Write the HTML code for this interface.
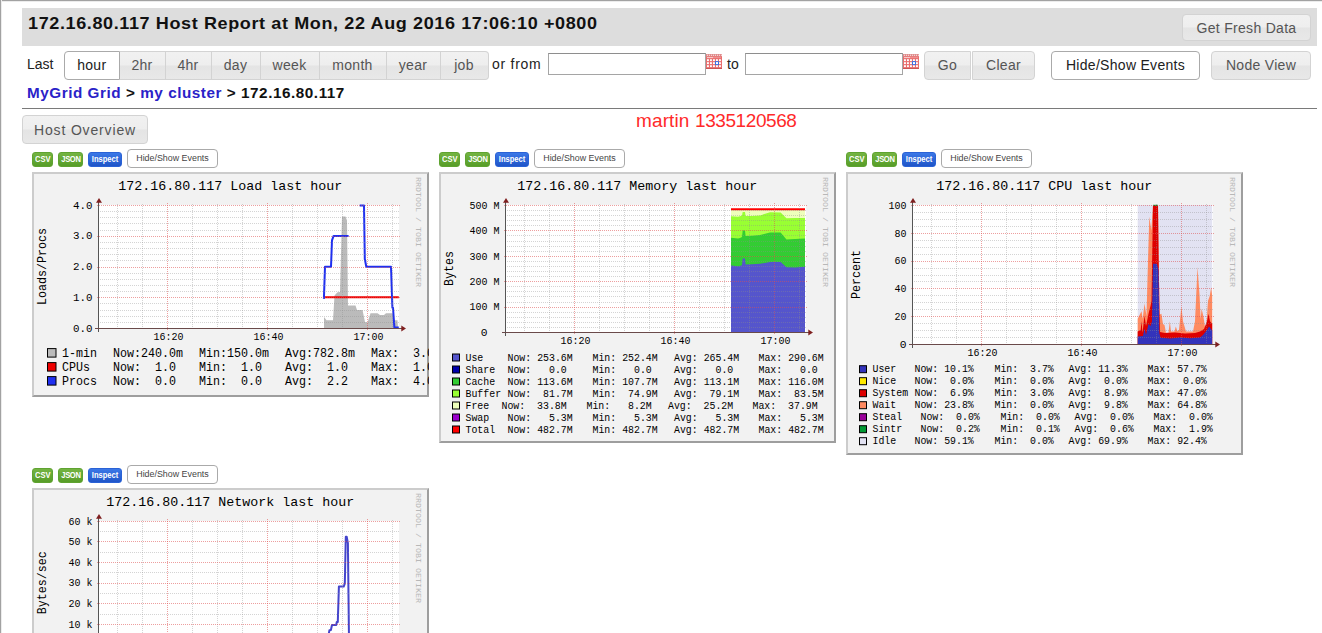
<!DOCTYPE html>
<html><head><meta charset="utf-8"><title>Host Report</title><style>
*{box-sizing:border-box}
html,body{margin:0;padding:0}
body{width:1322px;height:633px;overflow:hidden;background:#fff;position:relative;font-family:"Liberation Sans",sans-serif;font-size:13px;color:#222}
.abs{position:absolute}
.frame-top{position:absolute;left:0;top:0;width:1322px;height:2px;background:linear-gradient(#a2a2a2 0,#a2a2a2 50%,#ececec 50%,#ececec 100%)}
.frame-left{position:absolute;left:0;top:0;width:2px;height:633px;background:linear-gradient(90deg,#a2a2a2 0,#a2a2a2 50%,#ececec 50%,#ececec 100%)}
.hdr{position:absolute;left:22px;top:8px;width:1295px;height:38px;background:#dddddd}
.hdr h1{position:absolute;left:5.5px;top:5.5px;margin:0;font-size:17px;line-height:20px;font-weight:bold;color:#111;white-space:nowrap;letter-spacing:0.58px;transform:scaleX(1.06);transform-origin:0 0}
.btn{position:absolute;height:28.5px;border:1px solid #d3d3d3;border-radius:4px;background:linear-gradient(#f1f1f1 0,#eeeeee 49%,#e4e4e4 51%,#e8e8e8 100%);color:#555;font-size:14px;text-align:center;line-height:27px;white-space:nowrap;letter-spacing:0.3px}
.btn.on{background:#fff;border-color:#aaa;color:#212121}
.seg{border-radius:0;border-left-width:0}
.txt{position:absolute;white-space:nowrap;font-size:14px;color:#222}
.inp{position:absolute;height:22px;border:1px solid #a5a5a5;border-top-color:#8e8e8e;background:#fff}
.crumb{position:absolute;left:26.5px;top:85px;font-weight:bold;font-size:14px;line-height:16px;white-space:nowrap;color:#111;letter-spacing:0.5px;transform:scaleX(1.09);transform-origin:0 0}
.crumb a{color:#2a22c8;text-decoration:none}
.hr{position:absolute;left:22px;top:108px;width:1295px;height:1px;background:#7a7a7a}
.wm{position:absolute;left:636px;top:109px;letter-spacing:-0.26px;font-size:19px;color:#ff2a2a;white-space:nowrap;line-height:24px}
.sb{position:absolute;height:15px;border-radius:3px;color:#fff;font-size:8.6px;font-weight:bold;text-align:center;line-height:12.5px;white-space:nowrap}
.sb span{display:inline-block;transform:scaleX(.88)}
.sb.g{background:linear-gradient(#74b442,#579d28);border:1px solid #5fa331}
.sb.b{background:linear-gradient(#3b78e7,#1f55c8);border:1px solid #2a62d6}
.hs{position:absolute;height:19px;width:91px;border:1px solid #aaa;border-radius:4px;background:#fff;color:#444;font-size:8.9px;text-align:center;line-height:17px;white-space:nowrap}
svg{position:absolute;display:block}
svg text{font-family:"Liberation Mono",monospace;fill:#000}
</style></head><body>
<div class="frame-top"></div><div class="frame-left"></div>
<div class="hdr"><h1 id="title">172.16.80.117 Host Report at Mon, 22 Aug 2016 17:06:10 +0800</h1></div>
<div class="btn" style="left:1182px;top:13.5px;width:129px;height:27px;line-height:26px">Get Fresh Data</div>
<div class="txt" style="left:27px;top:56px">Last</div>
<div class="btn on" style="left:64px;top:51px;width:55.5px;border-radius:4px 0 0 4px;">hour</div>
<div class="btn" style="left:119.5px;top:51px;width:46.0px;border-radius:0;border-left-width:0;border-left-width:0;">2hr</div>
<div class="btn" style="left:165.5px;top:51px;width:46.0px;border-radius:0;border-left-width:0;">4hr</div>
<div class="btn" style="left:211.5px;top:51px;width:49.0px;border-radius:0;border-left-width:0;">day</div>
<div class="btn" style="left:260.5px;top:51px;width:59.0px;border-radius:0;border-left-width:0;">week</div>
<div class="btn" style="left:319.5px;top:51px;width:67.0px;border-radius:0;border-left-width:0;">month</div>
<div class="btn" style="left:386.5px;top:51px;width:54.0px;border-radius:0;border-left-width:0;">year</div>
<div class="btn" style="left:440.5px;top:51px;width:48.0px;border-radius:0 4px 4px 0;border-left-width:0;">job</div>
<div class="txt" style="left:492px;top:56px;letter-spacing:0.74px">or from</div>
<div class="inp" style="left:548px;top:53px;width:158px"></div>
<svg style="left:706px;top:54px" width="16" height="15" viewBox="0 0 16 15"><rect x="0" y="0.3" width="16" height="2.2" fill="#c44"/><circle cx="1.2" cy="1.2" r="0.75" fill="#fff"/><circle cx="3.2" cy="1.2" r="0.75" fill="#fff"/><circle cx="5.2" cy="1.2" r="0.75" fill="#fff"/><circle cx="7.2" cy="1.2" r="0.75" fill="#fff"/><circle cx="9.2" cy="1.2" r="0.75" fill="#fff"/><circle cx="11.2" cy="1.2" r="0.75" fill="#fff"/><circle cx="13.2" cy="1.2" r="0.75" fill="#fff"/><circle cx="15.2" cy="1.2" r="0.75" fill="#fff"/><rect x="0" y="2.3" width="16" height="12.7" fill="#e96e6e"/><rect x="0" y="14" width="16" height="1" fill="#c95555"/><rect x="1" y="3.2" width="6" height="0.9" fill="#fbe0e0"/><rect x="7" y="3.2" width="8" height="0.9" fill="#f19a9a"/><rect x="1" y="5.2" width="1.9" height="1.9" fill="#fff"/><rect x="4" y="5.2" width="1.9" height="1.9" fill="#fff"/><rect x="7" y="5.2" width="1.9" height="1.9" fill="#fff"/><rect x="10" y="5.2" width="1.9" height="1.9" fill="#fff"/><rect x="13" y="5.2" width="1.9" height="1.9" fill="#fff"/><rect x="1" y="8.2" width="1.9" height="1.9" fill="#fff"/><rect x="4" y="8.2" width="1.9" height="1.9" fill="#fff"/><rect x="7" y="8.2" width="1.9" height="1.9" fill="#fff"/><rect x="10" y="8.2" width="1.9" height="1.9" fill="#fff"/><rect x="13" y="8.2" width="1.9" height="1.9" fill="#fff"/><rect x="1" y="11.2" width="1.9" height="1.9" fill="#fff"/><rect x="4" y="11.2" width="1.9" height="1.9" fill="#fff"/><rect x="7" y="11.2" width="1.9" height="1.9" fill="#fff"/><rect x="10" y="11.2" width="1.9" height="1.9" fill="#fff"/><rect x="13" y="11.2" width="1.9" height="1.9" fill="#fff"/><rect x="9.5" y="7.6" width="3" height="3" fill="#fff" stroke="#3d6fe0" stroke-width="1"/></svg>
<svg style="left:903px;top:54px" width="16" height="15" viewBox="0 0 16 15"><rect x="0" y="0.3" width="16" height="2.2" fill="#c44"/><circle cx="1.2" cy="1.2" r="0.75" fill="#fff"/><circle cx="3.2" cy="1.2" r="0.75" fill="#fff"/><circle cx="5.2" cy="1.2" r="0.75" fill="#fff"/><circle cx="7.2" cy="1.2" r="0.75" fill="#fff"/><circle cx="9.2" cy="1.2" r="0.75" fill="#fff"/><circle cx="11.2" cy="1.2" r="0.75" fill="#fff"/><circle cx="13.2" cy="1.2" r="0.75" fill="#fff"/><circle cx="15.2" cy="1.2" r="0.75" fill="#fff"/><rect x="0" y="2.3" width="16" height="12.7" fill="#e96e6e"/><rect x="0" y="14" width="16" height="1" fill="#c95555"/><rect x="1" y="3.2" width="6" height="0.9" fill="#fbe0e0"/><rect x="7" y="3.2" width="8" height="0.9" fill="#f19a9a"/><rect x="1" y="5.2" width="1.9" height="1.9" fill="#fff"/><rect x="4" y="5.2" width="1.9" height="1.9" fill="#fff"/><rect x="7" y="5.2" width="1.9" height="1.9" fill="#fff"/><rect x="10" y="5.2" width="1.9" height="1.9" fill="#fff"/><rect x="13" y="5.2" width="1.9" height="1.9" fill="#fff"/><rect x="1" y="8.2" width="1.9" height="1.9" fill="#fff"/><rect x="4" y="8.2" width="1.9" height="1.9" fill="#fff"/><rect x="7" y="8.2" width="1.9" height="1.9" fill="#fff"/><rect x="10" y="8.2" width="1.9" height="1.9" fill="#fff"/><rect x="13" y="8.2" width="1.9" height="1.9" fill="#fff"/><rect x="1" y="11.2" width="1.9" height="1.9" fill="#fff"/><rect x="4" y="11.2" width="1.9" height="1.9" fill="#fff"/><rect x="7" y="11.2" width="1.9" height="1.9" fill="#fff"/><rect x="10" y="11.2" width="1.9" height="1.9" fill="#fff"/><rect x="13" y="11.2" width="1.9" height="1.9" fill="#fff"/><rect x="9.5" y="7.6" width="3" height="3" fill="#fff" stroke="#3d6fe0" stroke-width="1"/></svg>
<div class="txt" style="left:727px;top:56px">to</div>
<div class="inp" style="left:745px;top:53px;width:158px"></div>
<div class="btn" style="left:924px;top:51px;width:47px;border-radius:4px 0 0 4px">Go</div>
<div class="btn" style="left:972px;top:51px;width:63px;border-radius:0 4px 4px 0">Clear</div>
<div class="btn on" style="left:1051px;top:51px;width:149px">Hide/Show Events</div>
<div class="btn" style="left:1211px;top:51px;width:100px">Node View</div>
<div class="crumb"><a>MyGrid Grid</a> &gt; <a>my cluster</a> &gt; 172.16.80.117</div>
<div class="hr"></div>
<div class="btn" style="left:22px;top:115px;width:126px;letter-spacing:0.85px;line-height:28px">Host Overview</div>
<div class="wm" style="letter-spacing:0.12px">martin</div><div class="wm" style="left:695px;letter-spacing:-0.42px">1335120568</div>
<div class="sb g" style="left:32px;top:152px;width:21px"><span>CSV</span></div>
<div class="sb g" style="left:58px;top:152px;width:25px;letter-spacing:-0.4px"><span>JSON</span></div>
<div class="sb b" style="left:88px;top:152px;width:34px"><span>Inspect</span></div>
<div class="hs" style="left:127px;top:149px">Hide/Show Events</div>
<div class="sb g" style="left:439px;top:152px;width:21px"><span>CSV</span></div>
<div class="sb g" style="left:465px;top:152px;width:25px;letter-spacing:-0.4px"><span>JSON</span></div>
<div class="sb b" style="left:495px;top:152px;width:34px"><span>Inspect</span></div>
<div class="hs" style="left:534px;top:149px">Hide/Show Events</div>
<div class="sb g" style="left:846px;top:152px;width:21px"><span>CSV</span></div>
<div class="sb g" style="left:872px;top:152px;width:25px;letter-spacing:-0.4px"><span>JSON</span></div>
<div class="sb b" style="left:902px;top:152px;width:34px"><span>Inspect</span></div>
<div class="hs" style="left:941px;top:149px">Hide/Show Events</div>
<div class="sb g" style="left:32px;top:468px;width:21px"><span>CSV</span></div>
<div class="sb g" style="left:58px;top:468px;width:25px;letter-spacing:-0.4px"><span>JSON</span></div>
<div class="sb b" style="left:88px;top:468px;width:34px"><span>Inspect</span></div>
<div class="hs" style="left:127px;top:465px">Hide/Show Events</div>
<svg style="left:32px;top:172px" width="397" height="225" viewBox="0 0 397 225"><rect x="0" y="0" width="397" height="225" fill="#f2f2f2"/><path d="M0 0H397V2H2V225H0Z" fill="#cccccc"/><path d="M397 0V225H0L2 223H395V2Z" fill="#9e9e9e"/><rect x="67" y="33" width="300" height="123" fill="#fff"/><path d="M292.0 156.0 L292.0 145.0 L294.5 148.3 L301.0 148.3 L302.5 123.5 L305.5 120.2 L308.0 120.0 L310.0 44.4 L313.5 44.4 L315.0 48.4 L316.0 133.5 L323.5 133.5 L325.0 138.0 L330.5 138.0 L333.0 150.0 L335.5 150.5 L338.5 141.2 L345.5 141.2 L348.0 143.0 L352.0 143.0 L354.0 141.2 L360.5 141.2 L362.5 148.3 L365.5 148.3 L366.0 156.0" fill="#bbbbbb"/><path d="M292.0 125.2 L366.8 125.2" stroke="#ee0000" stroke-width="2" fill="none"/><path d="M291.9 126.9 L293.0 94.8 L299.0 94.8 L300.0 68.3 L301.6 63.9 L316.6 63.9" stroke="#2030f0" stroke-width="2" fill="none" stroke-linejoin="round"/><path d="M327.7 33.5 L332.0 33.5 L332.8 87.0 L334.3 94.8 L359.0 94.8 L360.4 135.7 L361.0 135.7 L362.4 155.6 L366.8 155.6" stroke="#2030f0" stroke-width="2" fill="none" stroke-linejoin="round"/><path d="M66 150.5H368M66 144.5H368M66 138.5H368M66 131.5H368M66 119.5H368M66 113.5H368M66 107.5H368M66 101.5H368M66 88.5H368M66 82.5H368M66 76.5H368M66 70.5H368M66 58.5H368M66 51.5H368M66 45.5H368M66 39.5H368" stroke="#8f8f8f" stroke-opacity="0.38" stroke-width="1" stroke-dasharray="1 1" fill="none" shape-rendering="crispEdges"/><path d="M360.5 32V157M310.5 32V157M285.5 32V157M260.5 32V157M210.5 32V157M185.5 32V157M160.5 32V157M110.5 32V157M85.5 32V157" stroke="#8f8f8f" stroke-opacity="0.38" stroke-width="1" stroke-dasharray="1 1" fill="none" shape-rendering="crispEdges"/><path d="M65 156.5H369M65 125.5H369M65 95.5H369M65 64.5H369M65 33.5H369" stroke="#de5050" stroke-opacity="0.55" stroke-width="1" stroke-dasharray="1 1" fill="none" shape-rendering="crispEdges"/><path d="M135.5 31V158M235.5 31V158M335.5 31V158" stroke="#de5050" stroke-opacity="0.55" stroke-width="1" stroke-dasharray="1 1" fill="none" shape-rendering="crispEdges"/><path d="M66.5 160V29" stroke="#555" stroke-width="1" fill="none" shape-rendering="crispEdges"/><path d="M63 156.5H371" stroke="#6a4a4a" stroke-width="1" fill="none" shape-rendering="crispEdges"/><path d="M369.3 153.5L374 156.5L369.3 159.5Z" fill="#7f1f1f"/><path d="M64 30.7L67 26L70 30.7Z" fill="#7f1f1f"/><text x="198.3" y="18.1" font-size="13.4" text-anchor="middle" xml:space="preserve" textLength="224.00" lengthAdjust="spacingAndGlyphs">172.16.80.117 Load last hour</text><text x="60.5" y="159.7" font-size="11.3" text-anchor="end" xml:space="preserve" textLength="19.50" lengthAdjust="spacingAndGlyphs">0.0</text><text x="60.5" y="128.95" font-size="11.3" text-anchor="end" xml:space="preserve" textLength="19.50" lengthAdjust="spacingAndGlyphs">1.0</text><text x="60.5" y="98.2" font-size="11.3" text-anchor="end" xml:space="preserve" textLength="19.50" lengthAdjust="spacingAndGlyphs">2.0</text><text x="60.5" y="67.45" font-size="11.3" text-anchor="end" xml:space="preserve" textLength="19.50" lengthAdjust="spacingAndGlyphs">3.0</text><text x="60.5" y="36.7" font-size="11.3" text-anchor="end" xml:space="preserve" textLength="19.50" lengthAdjust="spacingAndGlyphs">4.0</text><text x="136.5" y="168.4" font-size="11.3" text-anchor="middle" xml:space="preserve" textLength="30.00" lengthAdjust="spacingAndGlyphs">16:20</text><text x="236.5" y="168.4" font-size="11.3" text-anchor="middle" xml:space="preserve" textLength="30.00" lengthAdjust="spacingAndGlyphs">16:40</text><text x="336.5" y="168.4" font-size="11.3" text-anchor="middle" xml:space="preserve" textLength="30.00" lengthAdjust="spacingAndGlyphs">17:00</text><g transform="translate(14 94.5) rotate(-90)"><text x="0" y="0" font-size="12" text-anchor="middle" xml:space="preserve" textLength="77.00" lengthAdjust="spacingAndGlyphs">Loads/Procs</text></g><g transform="translate(383.5 5) rotate(90)"><text x="0" y="0" font-size="8" text-anchor="start" xml:space="preserve" textLength="110.00" lengthAdjust="spacingAndGlyphs" style="fill:#b8b8b8">RRDTOOL / TOBI OETIKER</text></g><rect x="15.5" y="176.6" width="8.5" height="8.5" fill="#bbbbbb" stroke="#000" stroke-width="1"/><text x="30" y="184.6" font-size="12" text-anchor="start" xml:space="preserve" textLength="35.00" lengthAdjust="spacingAndGlyphs">1-min</text><text x="81" y="184.6" font-size="12" text-anchor="start" xml:space="preserve" textLength="70.00" lengthAdjust="spacingAndGlyphs">Now:240.0m</text><text x="167" y="184.6" font-size="12" text-anchor="start" xml:space="preserve" textLength="70.00" lengthAdjust="spacingAndGlyphs">Min:150.0m</text><text x="253" y="184.6" font-size="12" text-anchor="start" xml:space="preserve" textLength="70.00" lengthAdjust="spacingAndGlyphs">Avg:782.8m</text><text x="339" y="184.6" font-size="12" text-anchor="start" xml:space="preserve" textLength="70.00" lengthAdjust="spacingAndGlyphs">Max:  3.0 </text><rect x="15.5" y="190.6" width="8.5" height="8.5" fill="#ee0000" stroke="#000" stroke-width="1"/><text x="30" y="198.6" font-size="12" text-anchor="start" xml:space="preserve" textLength="28.00" lengthAdjust="spacingAndGlyphs">CPUs</text><text x="81" y="198.6" font-size="12" text-anchor="start" xml:space="preserve" textLength="70.00" lengthAdjust="spacingAndGlyphs">Now:  1.0 </text><text x="167" y="198.6" font-size="12" text-anchor="start" xml:space="preserve" textLength="70.00" lengthAdjust="spacingAndGlyphs">Min:  1.0 </text><text x="253" y="198.6" font-size="12" text-anchor="start" xml:space="preserve" textLength="70.00" lengthAdjust="spacingAndGlyphs">Avg:  1.0 </text><text x="339" y="198.6" font-size="12" text-anchor="start" xml:space="preserve" textLength="70.00" lengthAdjust="spacingAndGlyphs">Max:  1.0 </text><rect x="15.5" y="204.6" width="8.5" height="8.5" fill="#2030f0" stroke="#000" stroke-width="1"/><text x="30" y="212.6" font-size="12" text-anchor="start" xml:space="preserve" textLength="35.00" lengthAdjust="spacingAndGlyphs">Procs</text><text x="81" y="212.6" font-size="12" text-anchor="start" xml:space="preserve" textLength="70.00" lengthAdjust="spacingAndGlyphs">Now:  0.0 </text><text x="167" y="212.6" font-size="12" text-anchor="start" xml:space="preserve" textLength="70.00" lengthAdjust="spacingAndGlyphs">Min:  0.0 </text><text x="253" y="212.6" font-size="12" text-anchor="start" xml:space="preserve" textLength="70.00" lengthAdjust="spacingAndGlyphs">Avg:  2.2 </text><text x="339" y="212.6" font-size="12" text-anchor="start" xml:space="preserve" textLength="70.00" lengthAdjust="spacingAndGlyphs">Max:  4.0 </text></svg>
<svg style="left:439px;top:172px" width="397" height="271" viewBox="0 0 397 271"><rect x="0" y="0" width="397" height="271" fill="#f2f2f2"/><path d="M0 0H397V2H2V271H0Z" fill="#cccccc"/><path d="M397 0V271H0L2 269H395V2Z" fill="#9e9e9e"/><rect x="67" y="33" width="300" height="127" fill="#fff"/><path d="M292.0 37.5 L366.0 37.5 L366.0 160 L292.0 160 Z" fill="#eeffbb"/><path d="M292.0 44.3 L299.0 44.8 L301.0 44.3 L303.0 43.6 L303.7 40.0 L306.0 40.0 L306.6 44.0 L313.0 43.9 L321.0 43.4 L331.0 40.3 L341.6 40.6 L347.5 46.2 L356.0 46.0 L366.0 46.0 L366.0 160 L292.0 160 Z" fill="#99ff33"/><path d="M292.0 65.7 L299.0 66.6 L301.0 66.0 L303.0 65.0 L303.7 58.5 L306.0 58.5 L306.6 64.0 L313.0 63.8 L321.0 63.0 L331.0 60.4 L341.6 60.6 L347.5 67.5 L356.0 67.0 L366.0 66.4 L366.0 160 L292.0 160 Z" fill="#33cc33"/><path d="M292.0 93.4 L299.0 94.3 L301.0 94.0 L303.0 93.0 L303.7 86.5 L306.0 86.5 L306.6 92.4 L313.0 92.2 L321.0 91.8 L331.0 90.0 L341.6 90.0 L347.5 95.3 L356.0 95.5 L366.0 94.8 L366.0 160 L292.0 160 Z" fill="#5555cc"/><path d="M292.0 37.3 L366.0 37.3" stroke="#ff0000" stroke-width="2" fill="none"/><path d="M66 155.5H368M66 150.5H368M66 145.5H368M66 140.5H368M66 130.5H368M66 124.5H368M66 119.5H368M66 114.5H368M66 104.5H368M66 99.5H368M66 94.5H368M66 89.5H368M66 79.5H368M66 74.5H368M66 69.5H368M66 63.5H368M66 53.5H368M66 48.5H368M66 43.5H368M66 38.5H368" stroke="#8f8f8f" stroke-opacity="0.38" stroke-width="1" stroke-dasharray="1 1" fill="none" shape-rendering="crispEdges"/><path d="M360.5 32V161M310.5 32V161M285.5 32V161M260.5 32V161M210.5 32V161M185.5 32V161M160.5 32V161M110.5 32V161M85.5 32V161" stroke="#8f8f8f" stroke-opacity="0.38" stroke-width="1" stroke-dasharray="1 1" fill="none" shape-rendering="crispEdges"/><path d="M65 160.5H369M65 135.5H369M65 109.5H369M65 84.5H369M65 58.5H369M65 33.5H369" stroke="#de5050" stroke-opacity="0.55" stroke-width="1" stroke-dasharray="1 1" fill="none" shape-rendering="crispEdges"/><path d="M135.5 31V162M235.5 31V162M335.5 31V162" stroke="#de5050" stroke-opacity="0.55" stroke-width="1" stroke-dasharray="1 1" fill="none" shape-rendering="crispEdges"/><path d="M66.5 164V29" stroke="#555" stroke-width="1" fill="none" shape-rendering="crispEdges"/><path d="M63 160.5H371" stroke="#6a4a4a" stroke-width="1" fill="none" shape-rendering="crispEdges"/><path d="M369.3 157.5L374 160.5L369.3 163.5Z" fill="#7f1f1f"/><path d="M64 30.7L67 26L70 30.7Z" fill="#7f1f1f"/><text x="198.3" y="18.1" font-size="13.4" text-anchor="middle" xml:space="preserve" textLength="240.00" lengthAdjust="spacingAndGlyphs">172.16.80.117 Memory last hour</text><text x="48.5" y="163.7" font-size="11.3" text-anchor="end" xml:space="preserve">0</text><text x="60.5" y="138.29999999999998" font-size="11.3" text-anchor="end" xml:space="preserve" textLength="30.00" lengthAdjust="spacingAndGlyphs">100 M</text><text x="60.5" y="112.9" font-size="11.3" text-anchor="end" xml:space="preserve" textLength="30.00" lengthAdjust="spacingAndGlyphs">200 M</text><text x="60.5" y="87.50000000000001" font-size="11.3" text-anchor="end" xml:space="preserve" textLength="30.00" lengthAdjust="spacingAndGlyphs">300 M</text><text x="60.5" y="62.10000000000001" font-size="11.3" text-anchor="end" xml:space="preserve" textLength="30.00" lengthAdjust="spacingAndGlyphs">400 M</text><text x="60.5" y="36.7" font-size="11.3" text-anchor="end" xml:space="preserve" textLength="30.00" lengthAdjust="spacingAndGlyphs">500 M</text><text x="136.5" y="172.4" font-size="11.3" text-anchor="middle" xml:space="preserve" textLength="30.00" lengthAdjust="spacingAndGlyphs">16:20</text><text x="236.5" y="172.4" font-size="11.3" text-anchor="middle" xml:space="preserve" textLength="30.00" lengthAdjust="spacingAndGlyphs">16:40</text><text x="336.5" y="172.4" font-size="11.3" text-anchor="middle" xml:space="preserve" textLength="30.00" lengthAdjust="spacingAndGlyphs">17:00</text><g transform="translate(14 96.5) rotate(-90)"><text x="0" y="0" font-size="12" text-anchor="middle" xml:space="preserve" textLength="35.00" lengthAdjust="spacingAndGlyphs">Bytes</text></g><g transform="translate(383.5 5) rotate(90)"><text x="0" y="0" font-size="8" text-anchor="start" xml:space="preserve" textLength="110.00" lengthAdjust="spacingAndGlyphs" style="fill:#b8b8b8">RRDTOOL / TOBI OETIKER</text></g><rect x="13.5" y="182.0" width="7" height="7" fill="#5555cc" stroke="#000" stroke-width="1"/><text x="26.5" y="188.5" font-size="10.5" text-anchor="start" xml:space="preserve" textLength="17.79" lengthAdjust="spacingAndGlyphs">Use</text><text x="68.5" y="188.5" font-size="10.5" text-anchor="start" xml:space="preserve" textLength="65.23" lengthAdjust="spacingAndGlyphs">Now: 253.6M</text><text x="153.5" y="188.5" font-size="10.5" text-anchor="start" xml:space="preserve" textLength="65.23" lengthAdjust="spacingAndGlyphs">Min: 252.4M</text><text x="235.0" y="188.5" font-size="10.5" text-anchor="start" xml:space="preserve" textLength="65.23" lengthAdjust="spacingAndGlyphs">Avg: 265.4M</text><text x="319.5" y="188.5" font-size="10.5" text-anchor="start" xml:space="preserve" textLength="65.23" lengthAdjust="spacingAndGlyphs">Max: 290.6M</text><rect x="13.5" y="194.0" width="7" height="7" fill="#0000aa" stroke="#000" stroke-width="1"/><text x="26.5" y="200.5" font-size="10.5" text-anchor="start" xml:space="preserve" textLength="29.65" lengthAdjust="spacingAndGlyphs">Share</text><text x="68.5" y="200.5" font-size="10.5" text-anchor="start" xml:space="preserve" textLength="59.30" lengthAdjust="spacingAndGlyphs">Now:   0.0</text><text x="153.5" y="200.5" font-size="10.5" text-anchor="start" xml:space="preserve" textLength="59.30" lengthAdjust="spacingAndGlyphs">Min:   0.0</text><text x="235.0" y="200.5" font-size="10.5" text-anchor="start" xml:space="preserve" textLength="59.30" lengthAdjust="spacingAndGlyphs">Avg:   0.0</text><text x="319.5" y="200.5" font-size="10.5" text-anchor="start" xml:space="preserve" textLength="59.30" lengthAdjust="spacingAndGlyphs">Max:   0.0</text><rect x="13.5" y="206.0" width="7" height="7" fill="#33cc33" stroke="#000" stroke-width="1"/><text x="26.5" y="212.5" font-size="10.5" text-anchor="start" xml:space="preserve" textLength="29.65" lengthAdjust="spacingAndGlyphs">Cache</text><text x="68.5" y="212.5" font-size="10.5" text-anchor="start" xml:space="preserve" textLength="65.23" lengthAdjust="spacingAndGlyphs">Now: 113.6M</text><text x="153.5" y="212.5" font-size="10.5" text-anchor="start" xml:space="preserve" textLength="65.23" lengthAdjust="spacingAndGlyphs">Min: 107.7M</text><text x="235.0" y="212.5" font-size="10.5" text-anchor="start" xml:space="preserve" textLength="65.23" lengthAdjust="spacingAndGlyphs">Avg: 113.1M</text><text x="319.5" y="212.5" font-size="10.5" text-anchor="start" xml:space="preserve" textLength="65.23" lengthAdjust="spacingAndGlyphs">Max: 116.0M</text><rect x="13.5" y="218.0" width="7" height="7" fill="#99ff33" stroke="#000" stroke-width="1"/><text x="26.5" y="224.5" font-size="10.5" text-anchor="start" xml:space="preserve" textLength="35.58" lengthAdjust="spacingAndGlyphs">Buffer</text><text x="68.5" y="224.5" font-size="10.5" text-anchor="start" xml:space="preserve" textLength="65.23" lengthAdjust="spacingAndGlyphs">Now:  81.7M</text><text x="153.5" y="224.5" font-size="10.5" text-anchor="start" xml:space="preserve" textLength="65.23" lengthAdjust="spacingAndGlyphs">Min:  74.9M</text><text x="235.0" y="224.5" font-size="10.5" text-anchor="start" xml:space="preserve" textLength="65.23" lengthAdjust="spacingAndGlyphs">Avg:  79.1M</text><text x="319.5" y="224.5" font-size="10.5" text-anchor="start" xml:space="preserve" textLength="65.23" lengthAdjust="spacingAndGlyphs">Max:  83.5M</text><rect x="13.5" y="230.0" width="7" height="7" fill="#eeffbb" stroke="#000" stroke-width="1"/><text x="26.5" y="236.5" font-size="10.5" text-anchor="start" xml:space="preserve" textLength="23.72" lengthAdjust="spacingAndGlyphs">Free</text><text x="62.5" y="236.5" font-size="10.5" text-anchor="start" xml:space="preserve" textLength="65.23" lengthAdjust="spacingAndGlyphs">Now:  33.8M</text><text x="147.5" y="236.5" font-size="10.5" text-anchor="start" xml:space="preserve" textLength="65.23" lengthAdjust="spacingAndGlyphs">Min:   8.2M</text><text x="229.0" y="236.5" font-size="10.5" text-anchor="start" xml:space="preserve" textLength="65.23" lengthAdjust="spacingAndGlyphs">Avg:  25.2M</text><text x="313.5" y="236.5" font-size="10.5" text-anchor="start" xml:space="preserve" textLength="65.23" lengthAdjust="spacingAndGlyphs">Max:  37.9M</text><rect x="13.5" y="242.0" width="7" height="7" fill="#9900cc" stroke="#000" stroke-width="1"/><text x="26.5" y="248.5" font-size="10.5" text-anchor="start" xml:space="preserve" textLength="23.72" lengthAdjust="spacingAndGlyphs">Swap</text><text x="68.5" y="248.5" font-size="10.5" text-anchor="start" xml:space="preserve" textLength="65.23" lengthAdjust="spacingAndGlyphs">Now:   5.3M</text><text x="153.5" y="248.5" font-size="10.5" text-anchor="start" xml:space="preserve" textLength="65.23" lengthAdjust="spacingAndGlyphs">Min:   5.3M</text><text x="235.0" y="248.5" font-size="10.5" text-anchor="start" xml:space="preserve" textLength="65.23" lengthAdjust="spacingAndGlyphs">Avg:   5.3M</text><text x="319.5" y="248.5" font-size="10.5" text-anchor="start" xml:space="preserve" textLength="65.23" lengthAdjust="spacingAndGlyphs">Max:   5.3M</text><rect x="13.5" y="254.0" width="7" height="7" fill="#ff0000" stroke="#000" stroke-width="1"/><text x="26.5" y="260.5" font-size="10.5" text-anchor="start" xml:space="preserve" textLength="29.65" lengthAdjust="spacingAndGlyphs">Total</text><text x="68.5" y="260.5" font-size="10.5" text-anchor="start" xml:space="preserve" textLength="65.23" lengthAdjust="spacingAndGlyphs">Now: 482.7M</text><text x="153.5" y="260.5" font-size="10.5" text-anchor="start" xml:space="preserve" textLength="65.23" lengthAdjust="spacingAndGlyphs">Min: 482.7M</text><text x="235.0" y="260.5" font-size="10.5" text-anchor="start" xml:space="preserve" textLength="65.23" lengthAdjust="spacingAndGlyphs">Avg: 482.7M</text><text x="319.5" y="260.5" font-size="10.5" text-anchor="start" xml:space="preserve" textLength="65.23" lengthAdjust="spacingAndGlyphs">Max: 482.7M</text></svg>
<svg style="left:846px;top:172px" width="397" height="283" viewBox="0 0 397 283"><rect x="0" y="0" width="397" height="283" fill="#f2f2f2"/><path d="M0 0H397V2H2V283H0Z" fill="#cccccc"/><path d="M397 0V283H0L2 281H395V2Z" fill="#9e9e9e"/><rect x="67" y="33" width="300" height="139" fill="#fff"/><path d="M291.7 33.0 L366.2 33.0 L366.2 172 L291.7 172 Z" fill="#e2e2f2"/><path d="M291.7 146.8 L295.5 139.2 L296.7 146.8 L298.5 131.6 L300.5 144.0 L301.5 106.0 L303.3 44.5 L305.3 58.4 L307.0 33.0 L312.0 33.0 L312.8 98.0 L313.0 143.0 L315.4 141.7 L317.0 151.9 L318.5 153.0 L320.0 160.7 L322.5 160.7 L323.8 149.3 L325.0 159.4 L328.5 159.4 L329.8 154.4 L331.3 159.0 L333.0 158.0 L335.4 134.2 L337.0 149.3 L340.0 159.4 L347.0 159.4 L349.0 149.3 L351.5 95.0 L353.6 124.0 L354.6 146.8 L355.6 136.7 L357.4 144.3 L358.9 154.4 L360.2 154.4 L362.0 129.0 L363.7 124.0 L365.2 115.2 L366.2 124.0 L366.2 172 L291.7 172 Z" fill="#ff8a60"/><path d="M291.7 159.4 L294.7 158.0 L295.5 149.0 L296.5 160.7 L298.5 143.8 L300.0 154.0 L302.5 141.7 L304.5 134.0 L305.5 129.0 L307.0 33.0 L312.0 33.0 L312.8 98.8 L314.0 160.0 L319.0 161.0 L329.0 160.5 L339.0 161.5 L349.0 161.0 L354.0 159.4 L358.0 157.0 L361.0 149.3 L362.5 141.7 L364.0 149.3 L366.2 152.0 L366.2 172 L291.7 172 Z" fill="#dd0000"/><path d="M291.7 164.5 L297.0 164.0 L298.5 156.4 L300.0 163.0 L302.5 151.9 L304.5 154.0 L306.0 149.3 L307.0 91.7 L311.0 91.7 L312.5 98.8 L313.3 160.7 L314.5 165.7 L324.0 166.5 L334.0 165.6 L344.0 166.3 L354.0 165.5 L357.0 163.0 L361.0 158.0 L363.0 154.4 L365.0 157.0 L366.2 159.0 L366.2 172 L291.7 172 Z" fill="#3333bb"/><path d="M307.0 33.3 L312.0 33.3" stroke="#009933" stroke-width="1" fill="none"/><path d="M66 165.5H368M66 158.5H368M66 151.5H368M66 137.5H368M66 130.5H368M66 123.5H368M66 109.5H368M66 103.5H368M66 96.5H368M66 82.5H368M66 75.5H368M66 68.5H368M66 54.5H368M66 47.5H368M66 40.5H368" stroke="#8f8f8f" stroke-opacity="0.38" stroke-width="1" stroke-dasharray="1 1" fill="none" shape-rendering="crispEdges"/><path d="M360.5 32V173M310.5 32V173M285.5 32V173M260.5 32V173M210.5 32V173M185.5 32V173M160.5 32V173M110.5 32V173M85.5 32V173" stroke="#8f8f8f" stroke-opacity="0.38" stroke-width="1" stroke-dasharray="1 1" fill="none" shape-rendering="crispEdges"/><path d="M65 172.5H369M65 144.5H369M65 116.5H369M65 89.5H369M65 61.5H369M65 33.5H369" stroke="#de5050" stroke-opacity="0.55" stroke-width="1" stroke-dasharray="1 1" fill="none" shape-rendering="crispEdges"/><path d="M135.5 31V174M235.5 31V174M335.5 31V174" stroke="#de5050" stroke-opacity="0.55" stroke-width="1" stroke-dasharray="1 1" fill="none" shape-rendering="crispEdges"/><path d="M66.5 176V29" stroke="#555" stroke-width="1" fill="none" shape-rendering="crispEdges"/><path d="M63 172.5H371" stroke="#6a4a4a" stroke-width="1" fill="none" shape-rendering="crispEdges"/><path d="M369.3 169.5L374 172.5L369.3 175.5Z" fill="#7f1f1f"/><path d="M64 30.7L67 26L70 30.7Z" fill="#7f1f1f"/><text x="198.3" y="18.1" font-size="13.4" text-anchor="middle" xml:space="preserve" textLength="216.00" lengthAdjust="spacingAndGlyphs">172.16.80.117 CPU last hour</text><text x="60.5" y="175.7" font-size="11.3" text-anchor="end" xml:space="preserve">0</text><text x="60.5" y="147.89999999999998" font-size="11.3" text-anchor="end" xml:space="preserve" textLength="12.00" lengthAdjust="spacingAndGlyphs">20</text><text x="60.5" y="120.10000000000001" font-size="11.3" text-anchor="end" xml:space="preserve" textLength="12.00" lengthAdjust="spacingAndGlyphs">40</text><text x="60.5" y="92.3" font-size="11.3" text-anchor="end" xml:space="preserve" textLength="12.00" lengthAdjust="spacingAndGlyphs">60</text><text x="60.5" y="64.5" font-size="11.3" text-anchor="end" xml:space="preserve" textLength="12.00" lengthAdjust="spacingAndGlyphs">80</text><text x="60.5" y="36.7" font-size="11.3" text-anchor="end" xml:space="preserve" textLength="18.00" lengthAdjust="spacingAndGlyphs">100</text><text x="136.5" y="184.4" font-size="11.3" text-anchor="middle" xml:space="preserve" textLength="30.00" lengthAdjust="spacingAndGlyphs">16:20</text><text x="236.5" y="184.4" font-size="11.3" text-anchor="middle" xml:space="preserve" textLength="30.00" lengthAdjust="spacingAndGlyphs">16:40</text><text x="336.5" y="184.4" font-size="11.3" text-anchor="middle" xml:space="preserve" textLength="30.00" lengthAdjust="spacingAndGlyphs">17:00</text><g transform="translate(14 102.5) rotate(-90)"><text x="0" y="0" font-size="12" text-anchor="middle" xml:space="preserve" textLength="49.00" lengthAdjust="spacingAndGlyphs">Percent</text></g><g transform="translate(383.5 5) rotate(90)"><text x="0" y="0" font-size="8" text-anchor="start" xml:space="preserve" textLength="110.00" lengthAdjust="spacingAndGlyphs" style="fill:#b8b8b8">RRDTOOL / TOBI OETIKER</text></g><rect x="13.5" y="193.7" width="7" height="7" fill="#3333bb" stroke="#000" stroke-width="1"/><text x="26.5" y="200.2" font-size="10.5" text-anchor="start" xml:space="preserve" textLength="23.72" lengthAdjust="spacingAndGlyphs">User</text><text x="68.5" y="200.2" font-size="10.5" text-anchor="start" xml:space="preserve" textLength="59.30" lengthAdjust="spacingAndGlyphs">Now: 10.1%</text><text x="148.5" y="200.2" font-size="10.5" text-anchor="start" xml:space="preserve" textLength="59.30" lengthAdjust="spacingAndGlyphs">Min:  3.7%</text><text x="222.5" y="200.2" font-size="10.5" text-anchor="start" xml:space="preserve" textLength="59.30" lengthAdjust="spacingAndGlyphs">Avg: 11.3%</text><text x="301.5" y="200.2" font-size="10.5" text-anchor="start" xml:space="preserve" textLength="59.30" lengthAdjust="spacingAndGlyphs">Max: 57.7%</text><rect x="13.5" y="205.7" width="7" height="7" fill="#ffea00" stroke="#000" stroke-width="1"/><text x="26.5" y="212.2" font-size="10.5" text-anchor="start" xml:space="preserve" textLength="23.72" lengthAdjust="spacingAndGlyphs">Nice</text><text x="68.5" y="212.2" font-size="10.5" text-anchor="start" xml:space="preserve" textLength="59.30" lengthAdjust="spacingAndGlyphs">Now:  0.0%</text><text x="148.5" y="212.2" font-size="10.5" text-anchor="start" xml:space="preserve" textLength="59.30" lengthAdjust="spacingAndGlyphs">Min:  0.0%</text><text x="222.5" y="212.2" font-size="10.5" text-anchor="start" xml:space="preserve" textLength="59.30" lengthAdjust="spacingAndGlyphs">Avg:  0.0%</text><text x="301.5" y="212.2" font-size="10.5" text-anchor="start" xml:space="preserve" textLength="59.30" lengthAdjust="spacingAndGlyphs">Max:  0.0%</text><rect x="13.5" y="217.7" width="7" height="7" fill="#dd0000" stroke="#000" stroke-width="1"/><text x="26.5" y="224.2" font-size="10.5" text-anchor="start" xml:space="preserve" textLength="35.58" lengthAdjust="spacingAndGlyphs">System</text><text x="68.5" y="224.2" font-size="10.5" text-anchor="start" xml:space="preserve" textLength="59.30" lengthAdjust="spacingAndGlyphs">Now:  6.9%</text><text x="148.5" y="224.2" font-size="10.5" text-anchor="start" xml:space="preserve" textLength="59.30" lengthAdjust="spacingAndGlyphs">Min:  3.0%</text><text x="222.5" y="224.2" font-size="10.5" text-anchor="start" xml:space="preserve" textLength="59.30" lengthAdjust="spacingAndGlyphs">Avg:  8.9%</text><text x="301.5" y="224.2" font-size="10.5" text-anchor="start" xml:space="preserve" textLength="59.30" lengthAdjust="spacingAndGlyphs">Max: 47.0%</text><rect x="13.5" y="229.7" width="7" height="7" fill="#ff8a60" stroke="#000" stroke-width="1"/><text x="26.5" y="236.2" font-size="10.5" text-anchor="start" xml:space="preserve" textLength="23.72" lengthAdjust="spacingAndGlyphs">Wait</text><text x="68.5" y="236.2" font-size="10.5" text-anchor="start" xml:space="preserve" textLength="59.30" lengthAdjust="spacingAndGlyphs">Now: 23.8%</text><text x="148.5" y="236.2" font-size="10.5" text-anchor="start" xml:space="preserve" textLength="59.30" lengthAdjust="spacingAndGlyphs">Min:  0.0%</text><text x="222.5" y="236.2" font-size="10.5" text-anchor="start" xml:space="preserve" textLength="59.30" lengthAdjust="spacingAndGlyphs">Avg:  9.8%</text><text x="301.5" y="236.2" font-size="10.5" text-anchor="start" xml:space="preserve" textLength="59.30" lengthAdjust="spacingAndGlyphs">Max: 64.8%</text><rect x="13.5" y="241.7" width="7" height="7" fill="#990099" stroke="#000" stroke-width="1"/><text x="26.5" y="248.2" font-size="10.5" text-anchor="start" xml:space="preserve" textLength="29.65" lengthAdjust="spacingAndGlyphs">Steal</text><text x="74.5" y="248.2" font-size="10.5" text-anchor="start" xml:space="preserve" textLength="59.30" lengthAdjust="spacingAndGlyphs">Now:  0.0%</text><text x="154.5" y="248.2" font-size="10.5" text-anchor="start" xml:space="preserve" textLength="59.30" lengthAdjust="spacingAndGlyphs">Min:  0.0%</text><text x="228.5" y="248.2" font-size="10.5" text-anchor="start" xml:space="preserve" textLength="59.30" lengthAdjust="spacingAndGlyphs">Avg:  0.0%</text><text x="307.5" y="248.2" font-size="10.5" text-anchor="start" xml:space="preserve" textLength="59.30" lengthAdjust="spacingAndGlyphs">Max:  0.0%</text><rect x="13.5" y="253.7" width="7" height="7" fill="#009933" stroke="#000" stroke-width="1"/><text x="26.5" y="260.2" font-size="10.5" text-anchor="start" xml:space="preserve" textLength="29.65" lengthAdjust="spacingAndGlyphs">Sintr</text><text x="74.5" y="260.2" font-size="10.5" text-anchor="start" xml:space="preserve" textLength="59.30" lengthAdjust="spacingAndGlyphs">Now:  0.2%</text><text x="154.5" y="260.2" font-size="10.5" text-anchor="start" xml:space="preserve" textLength="59.30" lengthAdjust="spacingAndGlyphs">Min:  0.1%</text><text x="228.5" y="260.2" font-size="10.5" text-anchor="start" xml:space="preserve" textLength="59.30" lengthAdjust="spacingAndGlyphs">Avg:  0.6%</text><text x="307.5" y="260.2" font-size="10.5" text-anchor="start" xml:space="preserve" textLength="59.30" lengthAdjust="spacingAndGlyphs">Max:  1.9%</text><rect x="13.5" y="265.7" width="7" height="7" fill="#e2e2f2" stroke="#000" stroke-width="1"/><text x="26.5" y="272.2" font-size="10.5" text-anchor="start" xml:space="preserve" textLength="23.72" lengthAdjust="spacingAndGlyphs">Idle</text><text x="68.5" y="272.2" font-size="10.5" text-anchor="start" xml:space="preserve" textLength="59.30" lengthAdjust="spacingAndGlyphs">Now: 59.1%</text><text x="148.5" y="272.2" font-size="10.5" text-anchor="start" xml:space="preserve" textLength="59.30" lengthAdjust="spacingAndGlyphs">Min:  0.0%</text><text x="222.5" y="272.2" font-size="10.5" text-anchor="start" xml:space="preserve" textLength="59.30" lengthAdjust="spacingAndGlyphs">Avg: 69.9%</text><text x="301.5" y="272.2" font-size="10.5" text-anchor="start" xml:space="preserve" textLength="59.30" lengthAdjust="spacingAndGlyphs">Max: 92.4%</text></svg>
<svg style="left:32px;top:488px" width="397" height="145" viewBox="0 0 397 145"><rect x="0" y="0" width="397" height="260" fill="#f2f2f2"/><path d="M0 0H397V2H2V260H0Z" fill="#cccccc"/><path d="M397 0V260H0L2 258H395V2Z" fill="#9e9e9e"/><rect x="67" y="33" width="300" height="123.4" fill="#fff"/><path d="M296.4 148.0 L297.4 142.3 L298.9 142.0 L300.0 137.0 L304.2 137.0 L304.8 134.0 L305.8 133.9 L306.9 98.6 L311.7 98.6 L312.8 95.7 L313.8 48.8 L314.7 48.8 L315.9 55.1 L317.0 152.0" stroke="#4444cc" stroke-width="2" fill="none" stroke-linejoin="round"/><path d="M66 146.5H368M66 126.5H368M66 105.5H368M66 84.5H368M66 64.5H368M66 43.5H368" stroke="#8f8f8f" stroke-opacity="0.38" stroke-width="1" stroke-dasharray="1 1" fill="none" shape-rendering="crispEdges"/><path d="M360.5 32V146M310.5 32V146M285.5 32V146M260.5 32V146M210.5 32V146M185.5 32V146M160.5 32V146M110.5 32V146M85.5 32V146" stroke="#8f8f8f" stroke-opacity="0.38" stroke-width="1" stroke-dasharray="1 1" fill="none" shape-rendering="crispEdges"/><path d="M65 136.5H369M65 115.5H369M65 95.5H369M65 74.5H369M65 53.5H369M65 33.5H369" stroke="#de5050" stroke-opacity="0.55" stroke-width="1" stroke-dasharray="1 1" fill="none" shape-rendering="crispEdges"/><path d="M135.5 31V147M235.5 31V147M335.5 31V147" stroke="#de5050" stroke-opacity="0.55" stroke-width="1" stroke-dasharray="1 1" fill="none" shape-rendering="crispEdges"/><path d="M66.5 160.4V29" stroke="#555" stroke-width="1" fill="none" shape-rendering="crispEdges"/><path d="M64 30.7L67 26L70 30.7Z" fill="#7f1f1f"/><text x="198.3" y="18.1" font-size="13.4" text-anchor="middle" xml:space="preserve" textLength="248.00" lengthAdjust="spacingAndGlyphs">172.16.80.117 Network last hour</text><text x="60.5" y="139.5" font-size="11.3" text-anchor="end" xml:space="preserve" textLength="24.00" lengthAdjust="spacingAndGlyphs">10 k</text><text x="60.5" y="118.9" font-size="11.3" text-anchor="end" xml:space="preserve" textLength="24.00" lengthAdjust="spacingAndGlyphs">20 k</text><text x="60.5" y="98.3" font-size="11.3" text-anchor="end" xml:space="preserve" textLength="24.00" lengthAdjust="spacingAndGlyphs">30 k</text><text x="60.5" y="77.7" font-size="11.3" text-anchor="end" xml:space="preserve" textLength="24.00" lengthAdjust="spacingAndGlyphs">40 k</text><text x="60.5" y="57.10000000000001" font-size="11.3" text-anchor="end" xml:space="preserve" textLength="24.00" lengthAdjust="spacingAndGlyphs">50 k</text><text x="60.5" y="36.5" font-size="11.3" text-anchor="end" xml:space="preserve" textLength="24.00" lengthAdjust="spacingAndGlyphs">60 k</text><g transform="translate(14 94.7) rotate(-90)"><text x="0" y="0" font-size="12" text-anchor="middle" xml:space="preserve" textLength="63.00" lengthAdjust="spacingAndGlyphs">Bytes/sec</text></g><g transform="translate(383.5 5) rotate(90)"><text x="0" y="0" font-size="8" text-anchor="start" xml:space="preserve" textLength="110.00" lengthAdjust="spacingAndGlyphs" style="fill:#b8b8b8">RRDTOOL / TOBI OETIKER</text></g></svg>
</body></html>
